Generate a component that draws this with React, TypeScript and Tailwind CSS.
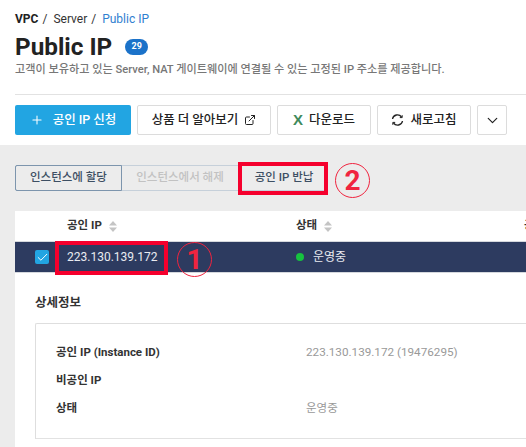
import { ExternalLink, Plus, ChevronDown, Check } from "lucide-react";

const font = { fontFamily: '"Roboto","Noto Sans CJK KR",sans-serif' };

function Sort() {
  return (
    <svg width="8" height="11" viewBox="0 0 8 11" className="ml-[7px]" fill="#c4c4c4">
      <path d="M4 0L8 4.5H0Z" />
      <path d="M4 11L0 6.5H8Z" />
    </svg>
  );
}

function Btn({ children, w }: { children: React.ReactNode; w: string }) {
  return (
    <div className={`${w} h-[30px] flex items-center justify-center gap-[6px] bg-white border border-[#dcdcdc] rounded-[2px] text-[12.5px] font-medium text-[#222]`}>
      {children}
    </div>
  );
}

export default function App() {
  return (
    <div className="w-[526px] h-[447px] overflow-hidden bg-[#ececec] relative" style={font}>
      <div className="bg-white h-[145px] px-[15px] pt-[12px]">
        <div className="flex items-center h-[14px] text-[12px] text-[#333]">
          <span className="font-bold text-[#222]">VPC</span>
          <span className="ml-[4px]">/</span>
          <span className="ml-[6px]">Server</span>
          <span className="ml-[4px]">/</span>
          <span className="ml-[6px] text-[#2f80d0]">Public IP</span>
        </div>
        <div className="flex items-center h-[27px] mt-[7px]">
          <h1 className="text-[24.3px] leading-[27px] font-bold text-[#222]">Public IP</h1>
          <span className="ml-[13px] w-[23px] h-[16px] rounded-full bg-[#1b72c9] text-white text-[9px] font-bold flex items-center justify-center">29</span>
        </div>
        <p className="text-[11.15px] leading-[14px] mt-[3px] font-medium text-[#777] whitespace-nowrap">
          고객이 보유하고 있는 Server, NAT 게이트웨이에 연결될 수 있는 고정된 IP 주소를 제공합니다.
        </p>
        <div className="h-px bg-[#e2e2e2] mt-[17px] w-[511px]" />
        <div className="flex gap-[6px] mt-[10px] w-[600px]">
          <div className="w-[116px] h-[30px] bg-[#22a5e2] rounded-[2px] flex items-center justify-center gap-[9px] text-white text-[12.5px] font-medium">
            <Plus size={14} strokeWidth={1.8} />
            공인 IP 신청
          </div>
          <Btn w="w-[134px]">
            상품 더 알아보기
            <ExternalLink size={12} strokeWidth={2} />
          </Btn>
          <Btn w="w-[94px]">
            <span className="font-bold text-[#3f8a5c] text-[15px]" style={{ fontFamily: '"Liberation Sans",sans-serif' }}>X</span>
            다운로드
          </Btn>
          <Btn w="w-[94px]">
            <svg width="13" height="12" viewBox="0 0 13 12" fill="none" stroke="#222" strokeWidth="1.3">
              <path d="M1.5 5A5 5 0 0 1 10.5 3" />
              <path d="M11.5 7A5 5 0 0 1 2.5 9" />
              <path d="M11.2 1.2V3.6H8.8" strokeWidth="1" />
              <path d="M1.8 10.8V8.4H4.2" strokeWidth="1" />
            </svg>
            새로고침
          </Btn>
          <Btn w="w-[30px]">
            <ChevronDown size={17} strokeWidth={1.7} />
          </Btn>
        </div>
      </div>

      <div className="pl-[15px] pt-[20px]">
        <div className="flex h-[26px] w-[313px] border border-[#c6d0da] rounded-[2px] text-[11.5px] font-medium">
          <div className="w-[107px] -m-px h-[26px] border border-[#7d95ad] rounded-l-[2px] flex items-center justify-center text-[#3d4f63]">인스턴스에 할당</div>
          <div className="w-[116px] ml-px flex items-center justify-center text-[#c2c2c2]">인스턴스에서 해제</div>
          <div className="flex-1 flex items-center justify-center pl-[4px] text-[#3d4f63] border-r border-[#7d95ad]">공인 IP 반납</div>
        </div>

        <div className="mt-[20px] bg-white h-[300px]">
          <div className="flex h-[30px] items-center text-[11.5px] font-bold text-[#333] whitespace-nowrap">
            <div className="w-[52px] shrink-0" />
            <div className="w-[229px] shrink-0 flex items-center">공인 IP<Sort /></div>
            <div className="w-[228px] shrink-0 flex items-center">상태<Sort /></div>
            <div className="shrink-0">공인</div>
          </div>
          <div className="flex h-[32px] items-center bg-[#2d3b60] border-y border-[#d5d8dd] text-[12px] text-[#e9ebf0]">
            <div className="w-[52px] shrink-0 pl-[20px]">
              <div className="w-[14px] h-[14px] rounded-[2px] bg-[#22a5e2] flex items-center justify-center">
                <Check size={13} strokeWidth={1.8} color="#fff" />
              </div>
            </div>
            <div className="w-[229px] shrink-0">223.130.139.172</div>
            <div className="flex items-center gap-[9px]">
              <span className="w-[8px] h-[8px] rounded-full bg-[#16c23f]" />
              운영중
            </div>
          </div>
          <div className="pl-[20px] pt-[22px]">
            <h2 className="text-[12.5px] leading-[16px] font-bold text-[#333]">상세정보</h2>
            <div className="mt-[12px] border-l border-t border-[#dedede] rounded-tl-[2px]">
              <div className="h-[115px] border-b border-[#e2e2e2] pl-[20px] pt-[15px] text-[11.5px]">
                <div className="grid grid-cols-[250px_1fr] auto-rows-[28px] items-center">
                  <div className="font-bold text-[#333]">공인 IP (Instance ID)</div>
                  <div className="text-[11.7px] text-[#999]">223.130.139.172 (19476295)</div>
                  <div className="font-bold text-[#333]">비공인 IP</div>
                  <div />
                  <div className="font-bold text-[#333]">상태</div>
                  <div className="text-[#999]">운영중</div>
                </div>
              </div>
            </div>
          </div>
        </div>
      </div>

      <div className="absolute left-[55px] top-[241px] w-[113px] h-[34px] border-[4px] border-[#f5002d]" />
      <div className="absolute left-[238px] top-[162px] w-[90px] h-[33px] border-[4px] border-[#f5002d]" />
      <div className="absolute left-[177px] top-[242px] w-[35px] h-[35px] rounded-full border-[1.5px] border-[#f0243f] flex items-center justify-center text-[28px] font-bold leading-none text-[#f0243f]">1</div>
      <div className="absolute left-[335px] top-[163px] w-[35px] h-[35px] rounded-full border-[1.5px] border-[#f0243f] flex items-center justify-center text-[28px] font-bold leading-none text-[#f0243f]">2</div>
    </div>
  );
}
